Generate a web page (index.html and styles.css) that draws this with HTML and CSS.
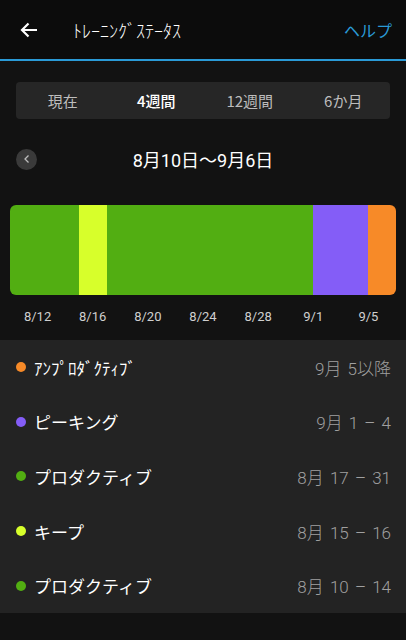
FILE: index.html
```html
<!DOCTYPE html>
<html lang="ja">
<head>
    <meta charset="UTF-8">
    <meta name="viewport" content="width=device-width, initial-scale=1.0">
    <title>トレーニングステータス</title>
    <link rel="stylesheet" href="styles.css">
</head>
<body>
    <header>
        <div class="back">
            <svg width="18" height="16" viewBox="0 0 18 16"><path d="M17 8H2M8.5 1.5 2 8l6.5 6.5" fill="none" stroke="#fff" stroke-width="2.2"/></svg>
        </div>
        <div class="title">ﾄﾚｰﾆﾝｸﾞｽﾃｰﾀｽ</div>
        <div class="help">ヘルプ</div>
    </header>

    <div class="summary">
        <!-- period tabs -->
        <div class="tabs">
            <div class="tab">現在</div>
            <div class="tab active">4週間</div>
            <div class="tab">12週間</div>
            <div class="tab">6か月</div>
        </div>

        <div class="range">
            <div class="prev">
                <svg width="8" height="10" viewBox="0 0 8 10"><path d="M5.5 1.5 2 5l3.5 3.5" fill="none" stroke="#bdbdbd" stroke-width="1.3"/></svg>
            </div>
            <div class="range-title">8月10日～9月6日</div>
            <div></div>
        </div>

        <!-- 28 days, one segment per status period -->
        <div class="bar">
            <div class="seg productive" style="flex: 5"></div>
            <div class="seg keep" style="flex: 2"></div>
            <div class="seg productive" style="flex: 15"></div>
            <div class="seg peaking" style="flex: 4"></div>
            <div class="seg unproductive" style="flex: 2"></div>
        </div>

        <div class="axis">
            <span>8/12</span>
            <span>8/16</span>
            <span>8/20</span>
            <span>8/24</span>
            <span>8/28</span>
            <span>9/1</span>
            <span>9/5</span>
        </div>
    </div>

    <ul class="status-list">
        <li>
            <span class="dot unproductive"></span>
            <span class="name">ｱﾝﾌﾟﾛﾀﾞｸﾃｨﾌﾞ</span>
            <span class="dates">9月 5以降</span>
        </li>
        <li>
            <span class="dot peaking"></span>
            <span class="name">ピーキング</span>
            <span class="dates">9月 1 – 4</span>
        </li>
        <li>
            <span class="dot productive"></span>
            <span class="name">プロダクティブ</span>
            <span class="dates">8月 17 – 31</span>
        </li>
        <li>
            <span class="dot keep"></span>
            <span class="name">キープ</span>
            <span class="dates">8月 15 – 16</span>
        </li>
        <li>
            <span class="dot productive"></span>
            <span class="name">プロダクティブ</span>
            <span class="dates">8月 10 – 14</span>
        </li>
    </ul>
</body>
</html>
```

FILE: styles.css
```css
body {
    margin: 0;
    padding: 0;
    font-family: Roboto, "Noto Sans CJK JP", sans-serif;
    background: #121212;
    color: #fff;
    width: 406px;
    height: 640px;
    overflow: hidden;
}

header {
    display: flex;
    align-items: center;
    height: 59px;
    background: #0c0c0c;
    border-bottom: 2px solid #2a9ad6;
}

header .back {
    display: flex;
    width: 18px;
    margin-left: 20px;
}

header .title {
    flex: 1;
    margin-left: 35px;
    font-family: "Noto Sans CJK JP", sans-serif;
    font-size: 18px;
    font-weight: 300;
}

header .help {
    margin-right: 14px;
    font-family: "Noto Sans CJK JP", sans-serif;
    font-size: 16px;
    color: #2a9ad6;
}

.summary {
    padding: 21px 0 0;
}

/* Tabs */
.tabs {
    display: flex;
    height: 37px;
    margin: 0 16px;
    background: #262626;
    border-radius: 4px;
}

.tab {
    flex: 1;
    display: flex;
    align-items: center;
    justify-content: center;
    font-family: "Noto Sans CJK JP", sans-serif;
    font-size: 15px;
    color: #bdbdbd;
}

.tab.active {
    color: #fff;
    font-weight: 500;
}

/* Date range */
.range {
    display: grid;
    grid-template-columns: 1fr auto 1fr;
    align-items: center;
    height: 22px;
    margin-top: 27px;
    padding: 0 16px;
}

.prev {
    display: flex;
    align-items: center;
    justify-content: center;
    width: 21px;
    height: 21px;
    border-radius: 50%;
    background: #3a3a3a;
}

.range-title {
    font-size: 18px;
}

/* Status bar */
.bar {
    display: flex;
    height: 90px;
    margin: 37px 10px 0;
    border-radius: 6px;
    overflow: hidden;
}

.productive {
    background: #52ae12;
}

.keep {
    background: #d7ff2b;
}

.peaking {
    background: #845df7;
}

.unproductive {
    background: #f78a28;
}

.axis {
    display: grid;
    grid-template-columns: repeat(7, 1fr);
    margin: 14px 10px 0;
    height: 31px;
    font-size: 13px;
    color: #cfcfcf;
}

.axis span {
    text-align: center;
}

/* List */
.status-list {
    list-style: none;
    margin: 0;
    padding: 0;
    background: #232323;
}

.status-list li {
    display: flex;
    align-items: center;
    height: 54.6px;
    padding: 0 15px 0 16px;
}

.dot {
    width: 10px;
    height: 10px;
    border-radius: 50%;
    margin-right: 8px;
}

.name {
    flex: 1;
    font-family: "Noto Sans CJK JP", sans-serif;
    font-size: 17px;
}

.dates {
    font-size: 17px;
    font-weight: 300;
    color: #a0a0a0;
    word-spacing: 2px;
}
```
